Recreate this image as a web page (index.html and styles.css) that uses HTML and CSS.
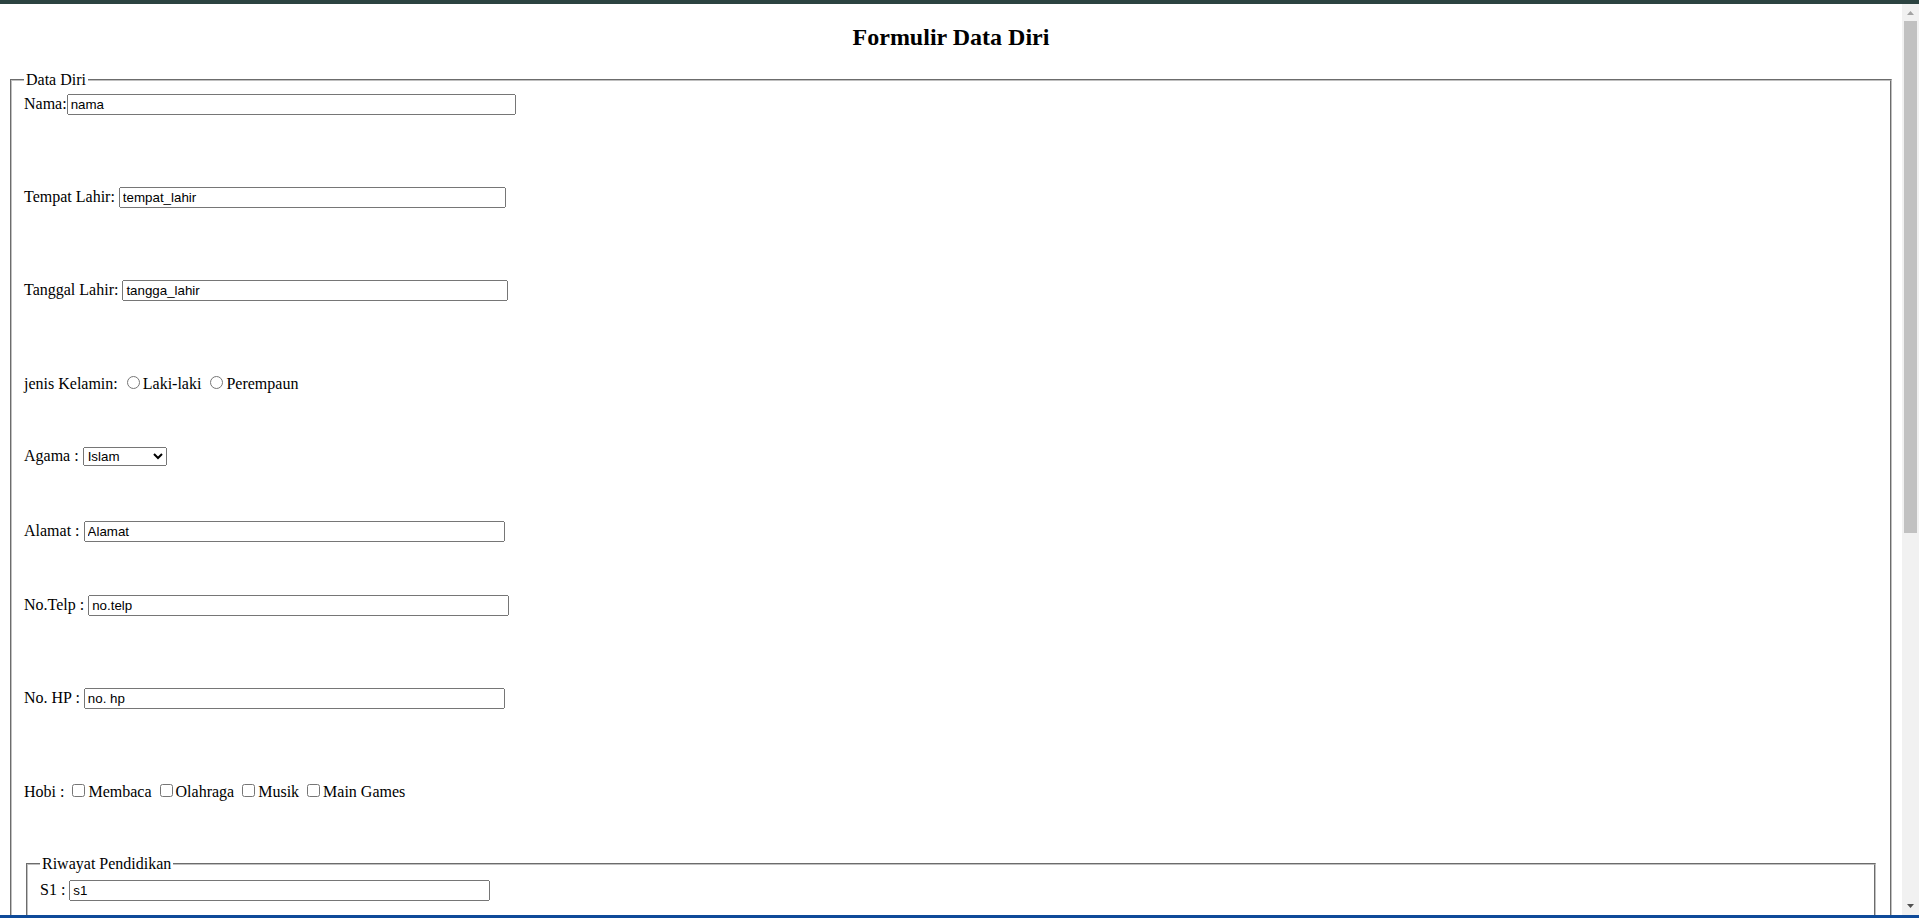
FILE: index.html
```html
<!DOCTYPE html>
<html lang="id">
<head>
<meta charset="utf-8">
<title>Formulir Data Diri</title>
<link rel="stylesheet" href="styles.css">
</head>
<body>
<div class="topbar"></div>
<div class="window">
  <main class="page">
    <h2 class="title">Formulir Data Diri</h2>
    <form class="form">
      <fieldset class="group">
        <legend>Data Diri</legend>
        <div class="field gap-nama"><label for="nama">Nama:</label><input id="nama" class="text w-nama" type="text" value="nama"></div>
        <div class="field gap-tempat"><label for="tempat">Tempat Lahir:</label> <input id="tempat" class="text w-tempat" type="text" value="tempat_lahir"></div>
        <div class="field gap-tanggal"><label for="tanggal">Tanggal Lahir:</label> <input id="tanggal" class="text w-tanggal" type="text" value="tangga_lahir"></div>
        <div class="field gap-jk"><label>jenis Kelamin:</label> <input type="radio" name="jk" id="laki"><label for="laki">Laki-laki</label> <input type="radio" name="jk" id="perempuan"><label for="perempuan">Perempaun</label></div>
        <div class="field gap-agama"><label for="agama">Agama :</label> <select id="agama" class="select">
            <option>Islam</option>
            <option>Kristen</option>
            <option>Katolik</option>
            <option>Hindu</option>
            <option>Buddha</option>
            <option>Konghucu</option>
          </select></div>
        <div class="field gap-alamat"><label for="alamat">Alamat :</label> <input id="alamat" class="text w-std" type="text" value="Alamat"></div>
        <div class="field gap-telp"><label for="telp">No.Telp :</label> <input id="telp" class="text w-std" type="text" value="no.telp"></div>
        <div class="field gap-hp"><label for="hp">No. HP :</label> <input id="hp" class="text w-std" type="text" value="no. hp"></div>
        <div class="field gap-hobi"><label>Hobi :</label> <input type="checkbox" id="h1"><label for="h1">Membaca</label> <input type="checkbox" id="h2"><label for="h2">Olahraga</label> <input type="checkbox" id="h3"><label for="h3">Musik</label> <input type="checkbox" id="h4"><label for="h4">Main Games</label></div>
        <fieldset class="group inner">
          <legend>Riwayat Pendidikan</legend>
          <div class="field gap-edu"><label for="s1">S1 :</label> <input id="s1" class="text w-std" type="text" value="s1"></div>
        </fieldset>
      </fieldset>
    </form>
  </main>
  <div class="scrollbar">
    <svg class="arrow arrow-up" width="7" height="4" viewBox="0 0 7 4"><path d="M0 4 L3.5 0 L7 4 Z" fill="#a3a3a3"/></svg>
    <div class="thumb"></div>
    <div class="track-rest"></div>
    <svg class="arrow arrow-down" width="7" height="4" viewBox="0 0 7 4"><path d="M0 0 L7 0 L3.5 4 Z" fill="#505050"/></svg>
  </div>
</div>
<div class="bottombar"></div>
</body>
</html>
```

FILE: styles.css
```css
html, body {
  margin: 0;
  padding: 0;
  height: 918px;
  overflow: hidden;
  background: #ffffff;
}

body {
  display: flex;
  flex-direction: column;
  font-family: "Liberation Serif", "Times New Roman", serif;
  color: #000;
}

.topbar {
  height: 4px;
  flex: none;
  background: #2c4341;
}

.bottombar {
  height: 3px;
  flex: none;
  background: #0e4a99;
}

.window {
  flex: 1;
  min-height: 0;
  display: flex;
}

.page {
  flex: 1;
  min-width: 0;
  overflow: hidden;
  padding: 0 8px;
}

.title {
  font-size: 24px;
  font-weight: bold;
  text-align: center;
  margin: 19.92px 0;
}

.form {
  margin: 0;
}

.group {
  font-size: 16px;
  margin: 0 2px;
  border: 2px groove #c0c0c0;
  padding: 0.35em 0.75em 0.625em;
}

.group legend {
  padding: 0 2px;
}

.inner {
  padding-top: 7px;
}

.text {
  box-sizing: border-box;
  height: 21px;
  font-family: "Liberation Sans", Arial, sans-serif;
  font-size: 13.333px;
  color: #000;
  margin: 0;
}

.w-nama { width: 449px; }
.w-tempat { width: 387px; }
.w-tanggal { width: 386px; }
.w-std { width: 421px; }

.select {
  box-sizing: border-box;
  width: 84px;
  height: 19px;
  font-family: "Liberation Sans", Arial, sans-serif;
  font-size: 13.333px;
  color: #000;
  margin: 0;
}

.gap-nama { margin-bottom: 72px; }
.gap-tempat { margin-bottom: 72px; }
.gap-tanggal { margin-bottom: 72px; }
.gap-jk { margin-bottom: 54px; }
.gap-agama { margin-bottom: 55px; }
.gap-alamat { margin-bottom: 53px; }
.gap-telp { margin-bottom: 72px; }
.gap-hp { margin-bottom: 72px; }
.gap-hobi { margin-bottom: 54px; }
.gap-edu { margin-bottom: 72px; }

.scrollbar {
  width: 17px;
  flex: none;
  background: #f1f1f1;
  display: flex;
  flex-direction: column;
  align-items: center;
}

.arrow-up {
  margin-top: 7px;
  flex: none;
}

.thumb {
  margin-top: 6px;
  width: 13px;
  height: 512px;
  flex: none;
  background: #c1c1c1;
}

.track-rest {
  flex: 1;
}

.arrow-down {
  margin-bottom: 7px;
  flex: none;
}
```
